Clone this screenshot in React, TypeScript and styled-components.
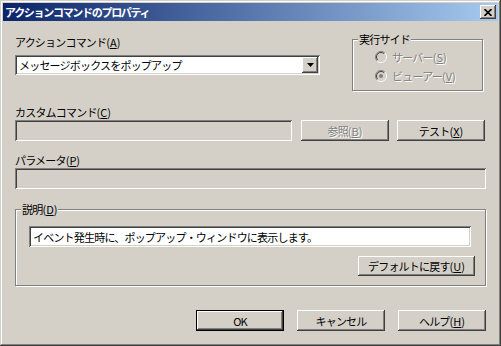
import React from 'react'
import styled, { createGlobalStyle, css } from 'styled-components'

const GlobalStyle = createGlobalStyle`
  html, body {
    margin: 0;
    padding: 0;
    background: #d4d0c8;
  }
  * {
    box-sizing: border-box;
  }
`

const face = '#d4d0c8'
const font = `"Noto Sans CJK JP", "Liberation Sans", sans-serif`

const raised = css`
  box-shadow: inset -1px -1px 0 #404040, inset 1px 1px 0 #ffffff,
    inset -2px -2px 0 #808080, inset 2px 2px 0 ${face};
`

const sunken = css`
  box-shadow: inset 1px 1px 0 #808080, inset -1px -1px 0 #ffffff,
    inset 2px 2px 0 #404040, inset -2px -2px 0 ${face};
`

const Window = styled.div`
  width: 501px;
  height: 346px;
  padding: 3px;
  background: ${face};
  box-shadow: inset -1px -1px 0 #404040, inset 1px 1px 0 ${face},
    inset -2px -2px 0 #808080, inset 2px 2px 0 #ffffff;
  font-family: ${font};
  font-size: 11px;
  letter-spacing: -0.8px;
  color: #000;
  display: flex;
  flex-direction: column;
`

const TitleBar = styled.div`
  height: 18px;
  display: flex;
  align-items: center;
  justify-content: space-between;
  padding: 0 2px 0 2px;
  background: linear-gradient(to right, #0a246a, #a6caf0);
`

const Title = styled.span`
  color: #fff;
  font-weight: bold;
  font-size: 11px;
  line-height: 14px;
  letter-spacing: -1.3px;
`

const CloseButton = styled.div`
  width: 16px;
  height: 14px;
  background: ${face};
  ${raised};
  display: flex;
  align-items: center;
  justify-content: center;
`

const Body = styled.div`
  flex: 1;
  display: flex;
  flex-direction: column;
  padding: 12px 12px 0 12px;
`

const TopRow = styled.div`
  display: flex;
  justify-content: space-between;
  align-items: flex-start;
`

const Column = styled.div`
  display: flex;
  flex-direction: column;
`

const Label = styled.div<{ $top?: number }>`
  line-height: 14px;
  margin-top: ${p => p.$top ?? 0}px;
`

const Mnemonic = styled.span`
  letter-spacing: 0;
`

const Combo = styled.div`
  width: 305px;
  height: 20px;
  margin-top: 6px;
  padding: 2px;
  background: #fff;
  ${sunken};
  display: flex;
  align-items: center;
`

const ComboText = styled.span`
  flex: 1;
  padding-left: 2px;
  line-height: 14px;
`

const ComboArrow = styled.div`
  width: 16px;
  height: 16px;
  background: ${face};
  ${raised};
  display: flex;
  align-items: center;
  justify-content: center;
`

const Group = styled.fieldset<{ $width: number; $top?: number; $right?: number }>`
  width: ${p => p.$width}px;
  margin: ${p => p.$top ?? 0}px ${p => p.$right ?? 0}px 0 0;
  padding: 0;
  min-width: 0;
  border: 1px solid #808080;
  box-shadow: inset 1px 1px 0 #ffffff, 1px 1px 0 #ffffff;
`

const Legend = styled.legend<{ $indent: number }>`
  margin-left: ${p => p.$indent}px;
  padding: 0 1px;
  line-height: 12px;
  background: ${face};
`

const RadioList = styled.div`
  display: flex;
  flex-direction: column;
  padding: 2px 0 5px 22px;
`

const RadioRow = styled.div`
  height: 19px;
  display: flex;
  align-items: center;
  gap: 5px;
`

const DisabledText = styled.span`
  color: #808080;
  text-shadow: 1px 1px 0 #ffffff;
  line-height: 14px;
`

const ControlRow = styled.div`
  display: flex;
  align-items: center;
  margin-top: 1px;
`

const Field = styled.div<{ $width: number; $height?: number; $disabled?: boolean }>`
  width: ${p => p.$width}px;
  height: ${p => p.$height ?? 21}px;
  padding: 0 4px;
  background: ${p => (p.$disabled ? face : '#fff')};
  ${sunken};
  display: flex;
  align-items: center;
  line-height: 14px;
`

const Button = styled.div<{ $width: number; $height?: number; $gap?: number; $default?: boolean }>`
  width: ${p => p.$width}px;
  height: ${p => p.$height ?? 21}px;
  margin-left: ${p => p.$gap ?? 0}px;
  background: ${face};
  display: flex;
  align-items: center;
  justify-content: center;
  line-height: 14px;
  ${p =>
    p.$default
      ? css`
          box-shadow: inset 0 0 0 1px #000, inset -2px -2px 0 #404040,
            inset 2px 2px 0 #ffffff, inset -3px -3px 0 #808080;
        `
      : raised};
`

const DescBody = styled.div`
  display: flex;
  flex-direction: column;
  align-items: flex-end;
  padding: 11px 12px 9px 13px;
`

const DescField = styled(Field)`
  align-self: flex-start;
`

const DefaultButton = styled(Button)`
  margin-top: 9px;
  margin-right: -2px;
`

const Footer = styled.div`
  display: flex;
  justify-content: flex-end;
  margin-top: 24px;
`

const Key: React.FC<{ k: string }> = ({ k }) => (
  <Mnemonic>
    (<u>{k}</u>)
  </Mnemonic>
)

const Radio: React.FC<{ checked?: boolean }> = ({ checked }) => (
  <svg width="12" height="12" viewBox="0 0 12 12">
    <circle cx="6" cy="6" r="5" fill={face} />
    <path d="M9.9 2.1 A5.5 5.5 0 0 0 2.1 9.9" stroke="#808080" fill="none" />
    <path d="M2.1 9.9 A5.5 5.5 0 0 0 9.9 2.1" stroke="#ffffff" fill="none" />
    <path d="M9.2 2.8 A4.5 4.5 0 0 0 2.8 9.2" stroke="#404040" fill="none" />
    <path d="M2.8 9.2 A4.5 4.5 0 0 0 9.2 2.8" stroke={face} fill="none" />
    {checked && <circle cx="6" cy="6" r="2" fill="#808080" />}
  </svg>
)

export default function App() {
  return (
    <>
      <GlobalStyle />
      <Window>
        <TitleBar>
          <Title>アクションコマンドのプロパティ</Title>
          <CloseButton>
            <svg width="8" height="7" viewBox="0 0 8 7">
              <path d="M0.5 0 L7.5 7 M7.5 0 L0.5 7" stroke="#000" strokeWidth="1.6" />
            </svg>
          </CloseButton>
        </TitleBar>
        <Body>
          <TopRow>
            <Column>
              <Label $top={2}>
                アクションコマンド<Key k="A" />
              </Label>
              <Combo>
                <ComboText>メッセージボックスをポップアップ</ComboText>
                <ComboArrow>
                  <svg width="7" height="4" viewBox="0 0 7 4">
                    <polygon points="0,0 7,0 3.5,4" fill="#000" />
                  </svg>
                </ComboArrow>
              </Combo>
            </Column>
            <Group $width={131} $right={3}>
              <Legend $indent={5}>実行サイド</Legend>
              <RadioList>
                <RadioRow>
                  <Radio />
                  <DisabledText>
                    サーバー<Key k="S" />
                  </DisabledText>
                </RadioRow>
                <RadioRow>
                  <Radio checked />
                  <DisabledText>
                    ビューアー<Key k="V" />
                  </DisabledText>
                </RadioRow>
              </RadioList>
            </Group>
          </TopRow>

          <Label $top={14}>
            カスタムコマンド<Key k="C" />
          </Label>
          <ControlRow>
            <Field $width={277} $disabled />
            <Button $width={88} $gap={9}>
              <DisabledText>
                参照<Key k="B" />
              </DisabledText>
            </Button>
            <Button $width={88} $gap={8}>
              テスト<Key k="X" />
            </Button>
          </ControlRow>

          <Label $top={12}>
            パラメータ<Key k="P" />
          </Label>
          <ControlRow>
            <Field $width={471} $disabled />
          </ControlRow>

          <Group $width={471} $top={14}>
            <Legend $indent={5}>
              説明<Key k="D" />
            </Legend>
            <DescBody>
              <DescField $width={442}>イベント発生時に、ポップアップ・ウィンドウに表示します。</DescField>
              <DefaultButton $width={117} $height={20}>
                デフォルトに戻す<Key k="U" />
              </DefaultButton>
            </DescBody>
          </Group>

          <Footer>
            <Button $width={88} $default>
              OK
            </Button>
            <Button $width={88} $gap={13}>
              キャンセル
            </Button>
            <Button $width={88} $gap={13}>
              ヘルプ<Key k="H" />
            </Button>
          </Footer>
        </Body>
      </Window>
    </>
  )
}
